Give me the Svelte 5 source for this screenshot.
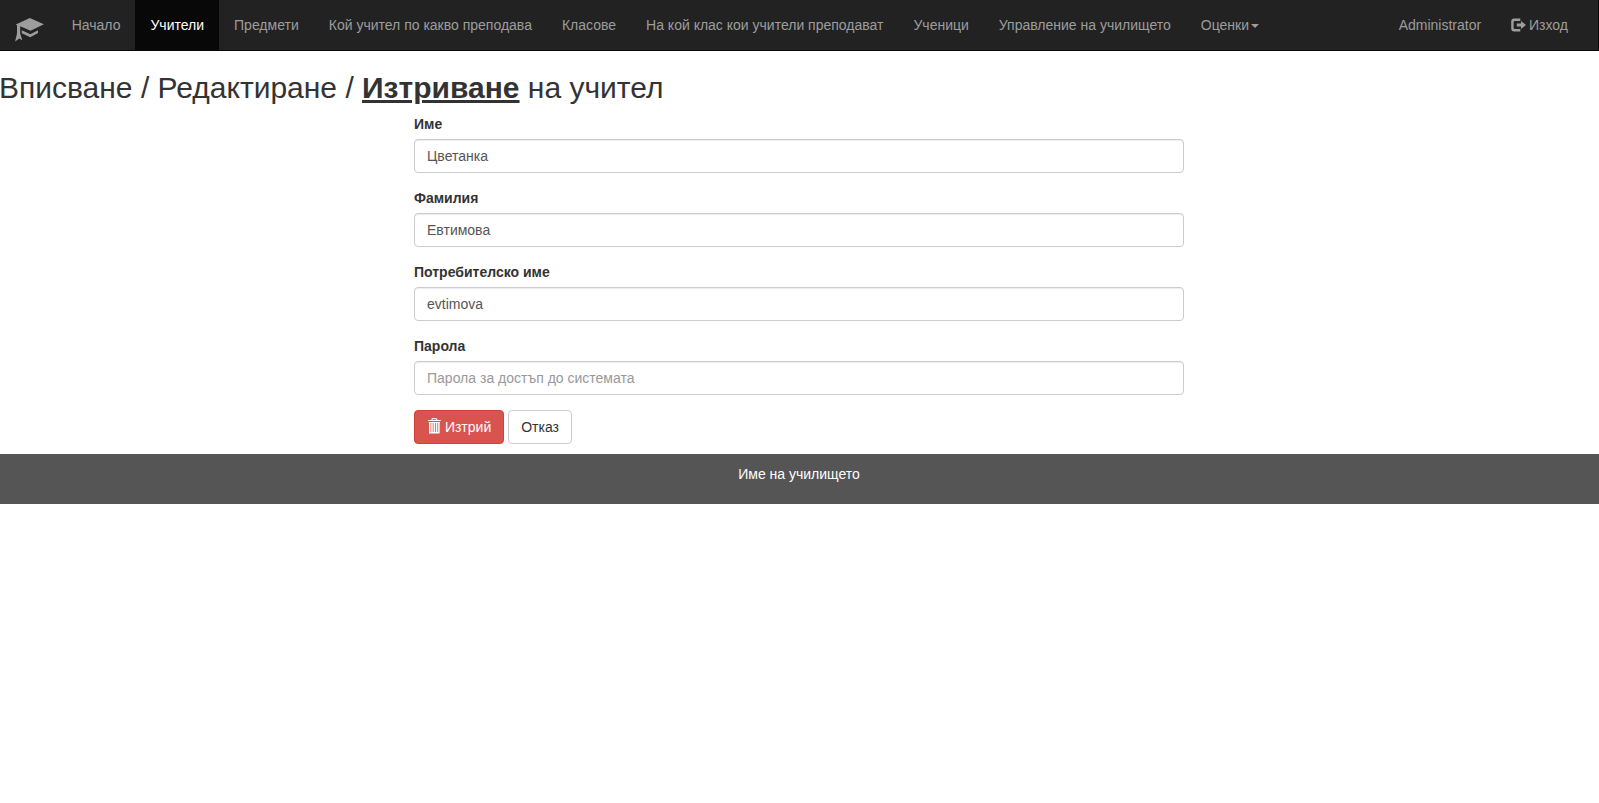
<script>
  const links = [
    'Начало',
    'Учители',
    'Предмети',
    'Кой учител по какво преподава',
    'Класове',
    'На кой клас кои учители преподават',
    'Ученици',
    'Управление на училището'
  ];
  const active = 'Учители';
  const fields = [
    { id: 'first', label: 'Име', value: 'Цветанка' },
    { id: 'last', label: 'Фамилия', value: 'Евтимова' },
    { id: 'user', label: 'Потребителско име', value: 'evtimova' },
    { id: 'pass', label: 'Парола', value: '', placeholder: 'Парола за достъп до системата' }
  ];
</script>

<nav class="navbar">
  <a class="brand" href="#home" aria-label="Начало">
    <svg width="30" height="24" viewBox="0 0 30 24" fill="currentColor">
      <path d="M1.8 6.4 15.8 0 29.9 6.2 16.6 12.8 6.2 8.3V15.4L8.3 22.3 5.3 20.6 1.1 23.5 3 15.4V7.2Z" />
      <path d="M7.8 12.2 16.3 16.2 24 12.2V15.1L16.3 19.2 7.8 15.3Z" />
    </svg>
  </a>
  <ul class="links">
    {#each links as link}
      <li><a href="#page" class:active={link === active}>{link}</a></li>
    {/each}
    <li><a href="#page">Оценки<span class="caret"></span></a></li>
  </ul>
  <ul class="links account">
    <li><a href="#page">Administrator</a></li>
    <li>
      <a href="#page"><svg class="exit" width="15" height="14" viewBox="0 0 15 14" fill="currentColor">
          <path d="M9.3 0.6H3.2A3 3 0 0 0 .2 3.6V10.4A3 3 0 0 0 3.2 13.4H9.3V11H3.9A1.3 1.3 0 0 1 2.6 9.7V4.3A1.3 1.3 0 0 1 3.9 3H9.3Z" />
          <path d="M10 3.1 15 7 10 10.9V8.4H5.8V5.6H10Z" />
        </svg> Изход</a>
    </li>
  </ul>
</nav>

<h2>Вписване / Редактиране / <strong>Изтриване</strong> на учител</h2>

<form>
  {#each fields as field}
    <div class="group">
      <label for={field.id}>{field.label}</label>
      <input id={field.id} type="text" value={field.value} placeholder={field.placeholder} />
    </div>
  {/each}
  <div class="buttons">
    <button type="button" class="danger"><svg class="trash" width="14" height="16" viewBox="0 0 14 16" fill="none" stroke="currentColor">
        <path d="M5 2V.7H9.7V2" />
        <path d="M1 2.5H13.7M1.8 4.5H13" />
        <path d="M2.8 5V14.5M5 5V14.5M7.3 5V14.5M9.6 5V14.5M11.9 5V14.5M2.1 14.7H12.6" stroke-width="1.5" />
      </svg> Изтрий</button>
    <button type="button">Отказ</button>
  </div>
</form>

<footer>Име на училището</footer>

<style>
  :global(body) {
    margin: 0;
    background: #fff;
    color: #333;
    font: 14px/20px 'Liberation Sans', Arial, sans-serif;
  }
  :global(*) {
    box-sizing: border-box;
  }
  .navbar {
    display: flex;
    height: 51px;
    padding-right: 15px;
    background: #222;
    border-right: 1px solid #080808;
    border-bottom: 1px solid #080808;
  }
  .navbar a {
    color: #9d9d9d;
    text-decoration: none;
  }
  .brand {
    width: 56.7px;
    padding: 18px 0 0 14px;
  }
  .brand svg {
    display: block;
  }
  .links {
    display: flex;
    margin: 0;
    padding: 0;
    list-style: none;
    white-space: nowrap;
  }
  .links a {
    display: block;
    height: 50px;
    padding: 15px;
  }
  .links a.active {
    color: #fff;
    background: #080808;
  }
  .account {
    margin-left: auto;
  }
  .caret {
    display: inline-block;
    margin-left: 2px;
    vertical-align: middle;
    border-top: 4px solid;
    border-right: 4px solid transparent;
    border-left: 4px solid transparent;
  }
  .exit {
    vertical-align: -2px;
    margin-right: -1px;
  }
  h2 {
    margin: 20px 0 10px -1px;
    font-size: 30px;
    font-weight: 400;
    line-height: 33px;
  }
  h2 strong {
    text-decoration: underline;
  }
  form {
    width: 800px;
    margin: 0 auto 0 399px;
    padding: 0 15px;
  }
  .group {
    margin-bottom: 15px;
  }
  label {
    display: block;
    margin-bottom: 5px;
    font-weight: 700;
  }
  input {
    display: block;
    width: 100%;
    height: 34px;
    padding: 6px 12px;
    font: inherit;
    color: #555;
    background: #fff;
    border: 1px solid #ccc;
    border-radius: 4px;
    box-shadow: inset 0 1px 1px rgba(0, 0, 0, 0.075);
  }
  input::placeholder {
    color: #999;
    opacity: 1;
  }
  .buttons {
    display: flex;
    gap: 4px;
    height: 44px;
  }
  button {
    height: 34px;
    padding: 6px 12px;
    font: inherit;
    color: #333;
    background: #fff;
    border: 1px solid #ccc;
    border-radius: 4px;
  }
  button.danger {
    color: #fff;
    background: #d9534f;
    border-color: #d43f3a;
  }
  .trash {
    margin-top: -2px;
    vertical-align: -2px;
  }
  footer {
    height: 50px;
    padding: 10px 1px 10px 0;
    color: #fff;
    background: #555;
    text-align: center;
  }
</style>
